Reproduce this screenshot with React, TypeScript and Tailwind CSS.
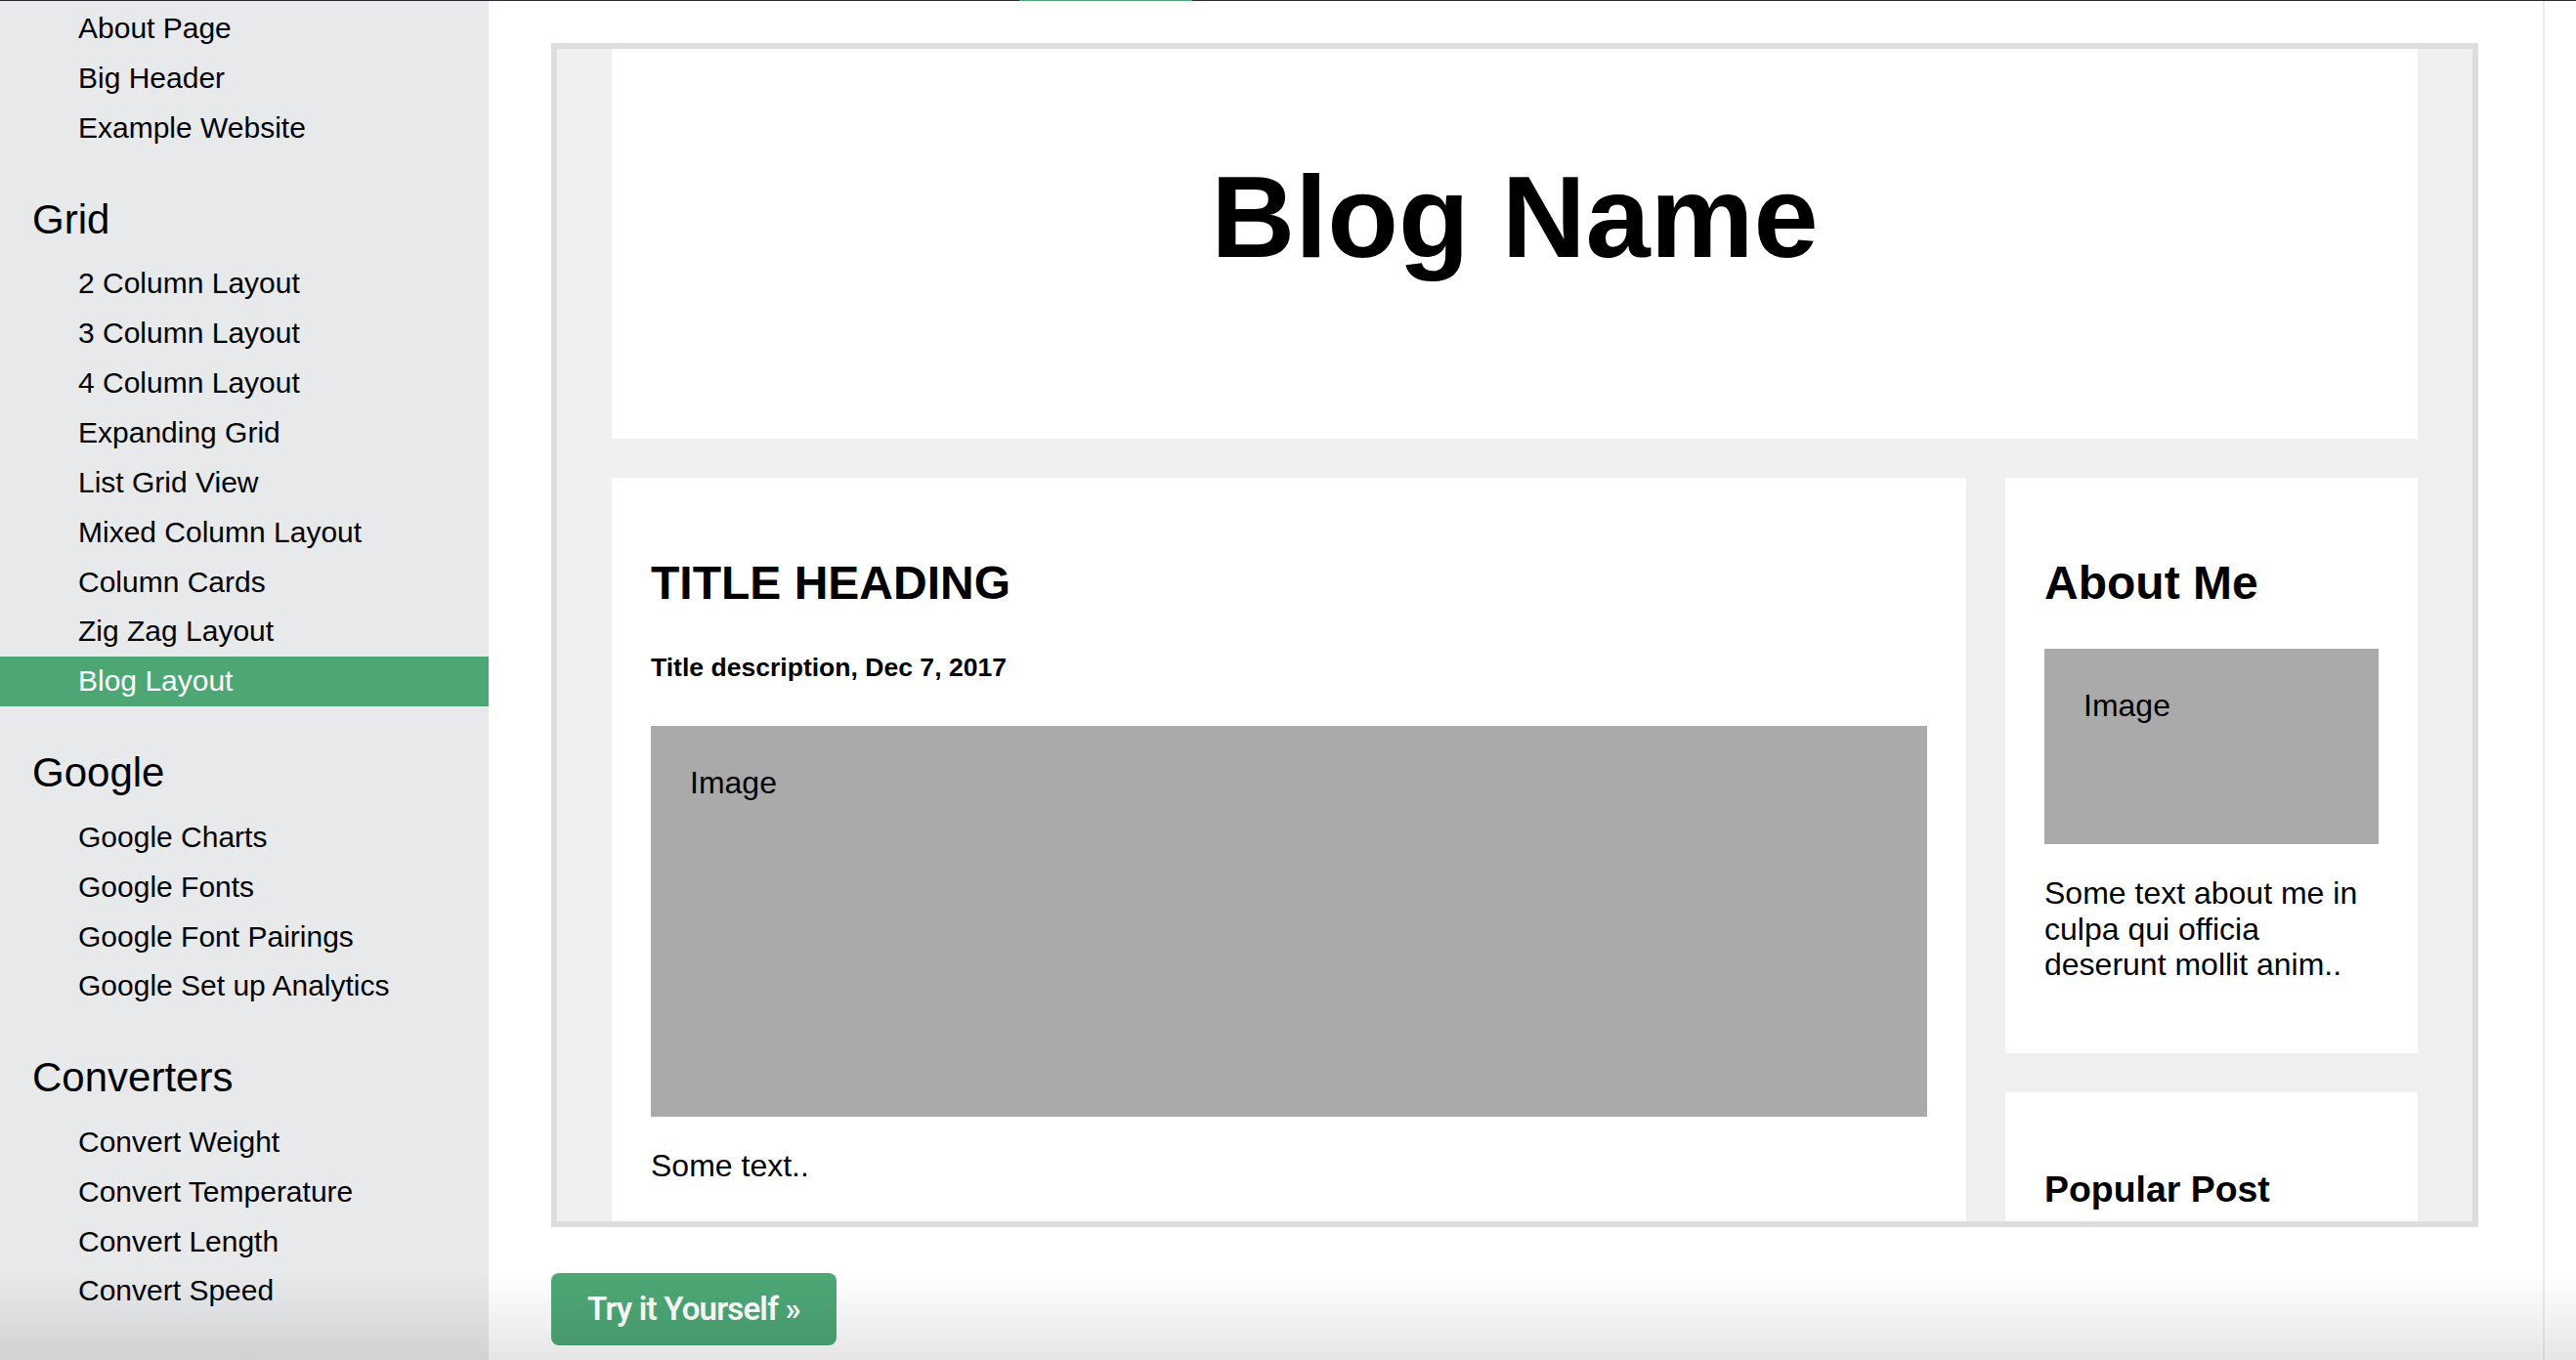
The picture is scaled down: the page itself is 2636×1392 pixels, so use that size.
import React from 'react';

interface NavSection {
  title?: string;
  items: string[];
}

const sections: NavSection[] = [
  { items: ['About Page', 'Big Header', 'Example Website'] },
  {
    title: 'Grid',
    items: [
      '2 Column Layout',
      '3 Column Layout',
      '4 Column Layout',
      'Expanding Grid',
      'List Grid View',
      'Mixed Column Layout',
      'Column Cards',
      'Zig Zag Layout',
      'Blog Layout'
    ]
  },
  {
    title: 'Google',
    items: ['Google Charts', 'Google Fonts', 'Google Font Pairings', 'Google Set up Analytics']
  },
  {
    title: 'Converters',
    items: ['Convert Weight', 'Convert Temperature', 'Convert Length', 'Convert Speed']
  }
];

const ACTIVE = 'Blog Layout';

const FakeImg = ({ height }: { height: string }) => (
  <div className={`bg-[#aaaaaa] p-[40px] text-[32px] leading-[1.15] text-black ${height}`}>Image</div>
);

const Sidebar = () => (
  <aside className="w-[500px] shrink-0 bg-[#e7e9eb] pt-[3px]">
    {sections.map((section, i) => (
      <div key={i}>
        {section.title && (
          <h2 className="mt-[43px] mb-[15px] pl-[33px] text-[42px] leading-[50.4px] font-normal text-black">
            {section.title}
          </h2>
        )}
        {section.items.map((item) => (
          <div
            key={item}
            className={
              item === ACTIVE
                ? 'pl-[80px] text-[30px] leading-[50.9px] bg-[#4da775] text-white'
                : 'pl-[80px] text-[30px] leading-[50.9px] text-black'
            }
          >
            {item}
          </div>
        ))}
      </div>
    ))}
  </aside>
);

const BlogFrame = () => (
  <div className="w-[1972px] h-[1212px] border-[6px] border-[#dddddd] bg-[#f0f0f0] overflow-hidden px-[56px]">
    {/* Header */}
    <div className="h-[399px] bg-white pt-[112px] text-center">
      <h1 className="text-[119px] leading-none font-bold text-black">Blog Name</h1>
    </div>

    <div className="flex gap-[40px] mt-[40px]">
      {/* Left column */}
      <div className="w-[1386px] shrink-0 bg-white px-[40px] pt-[40px] pb-[80px]">
        <h2 className="mt-[39.84px] text-[48px] leading-[1.15] font-bold text-black">TITLE HEADING</h2>
        <h5 className="mt-[44.35px] mb-[44.35px] text-[26.56px] leading-[1.15] font-bold text-black">
          Title description, Dec 7, 2017
        </h5>
        <FakeImg height="h-[400px]" />
        <p className="mt-[32px] mb-[32px] text-[32px] leading-[1.15] text-black">Some text..</p>
      </div>

      {/* Right column */}
      <div className="flex-1 flex flex-col gap-[40px]">
        <div className="bg-white px-[40px] pt-[40px] pb-[40px]">
          <h2 className="mt-[39.84px] mb-[39.84px] text-[48px] leading-[1.15] font-bold text-black">About Me</h2>
          <FakeImg height="h-[200px]" />
          <p className="mt-[32px] mb-[32px] text-[32px] leading-[1.15] text-black">
            Some text about me in culpa qui officia deserunt mollit anim..
          </p>
        </div>
        <div className="bg-white px-[40px] pt-[40px] pb-[80px]">
          <h3 className="mt-[37.44px] mb-[37.44px] text-[37.44px] leading-[1.15] font-bold text-black">
            Popular Post
          </h3>
        </div>
      </div>
    </div>
  </div>
);

const App = () => {
  return (
    <div
      className="relative w-[2636px] h-[1392px] overflow-hidden bg-white"
      style={{ fontFamily: '"Liberation Sans", Arial, sans-serif' }}
    >
      {/* Top strip */}
      <div className="h-px bg-[#282a35] flex">
        <div className="ml-[1043px] w-[177px] h-px bg-[#4da775]" />
      </div>

      <div className="flex h-[1391px]">
        <Sidebar />

        <main className="flex-1 pl-[64px] pt-[43px]">
          <BlogFrame />
          <button
            className="mt-[47px] w-[292px] h-[74px] rounded-[8px] bg-[#4da775] text-white text-[33px] font-semibold tracking-[-0.8px]"
            style={{ fontFamily: 'Roboto, "Open Sans", sans-serif' }}
          >
            Try it Yourself »
          </button>
        </main>

        <div className="w-[34px] shrink-0 border-l-2 border-[#ededed]" />
      </div>

      {/* Bottom window shading */}
      <div className="pointer-events-none absolute left-0 right-0 bottom-0 h-[90px] bg-gradient-to-b from-transparent to-black/10" />
    </div>
  );
};

export default App;
